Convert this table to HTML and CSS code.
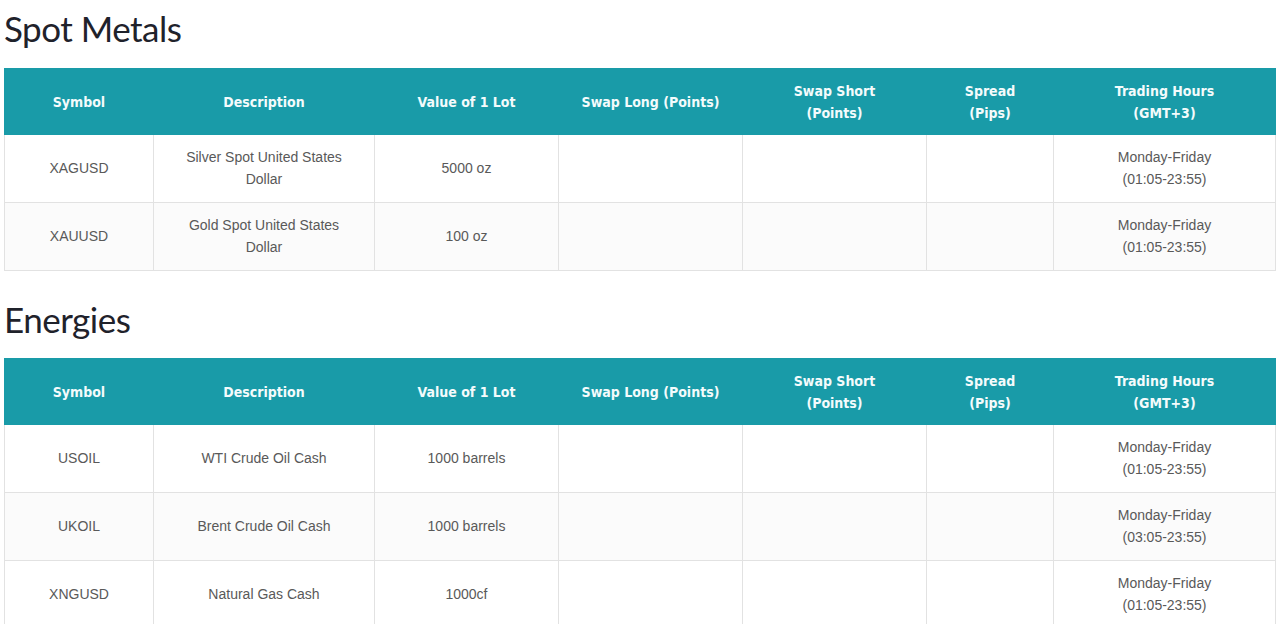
FILE: index.html
```html
<!DOCTYPE html>
<html lang="en">
<head>
<meta charset="utf-8">
<title>Contract Specifications</title>
<link rel="stylesheet" href="styles.css">
</head>
<body>
<section class="section">
  <h2 class="section-title">Spot Metals</h2>
  <table class="spec-table">
    <colgroup>
      <col class="c1"><col class="c2"><col class="c3"><col class="c4"><col class="c5"><col class="c6"><col class="c7">
    </colgroup>
    <thead>
      <tr>
        <th>Symbol</th>
        <th>Description</th>
        <th>Value of 1 Lot</th>
        <th>Swap Long (Points)</th>
        <th>Swap Short<br>(Points)</th>
        <th>Spread<br>(Pips)</th>
        <th>Trading Hours<br>(GMT+3)</th>
      </tr>
    </thead>
    <tbody>
      <tr>
        <td>XAGUSD</td>
        <td>Silver Spot United States<br>Dollar</td>
        <td>5000 oz</td>
        <td></td><td></td><td></td>
        <td>Monday-Friday<br>(01:05-23:55)</td>
      </tr>
      <tr>
        <td>XAUUSD</td>
        <td>Gold Spot United States<br>Dollar</td>
        <td>100 oz</td>
        <td></td><td></td><td></td>
        <td>Monday-Friday<br>(01:05-23:55)</td>
      </tr>
    </tbody>
  </table>
</section>
<section class="section">
  <h2 class="section-title">Energies</h2>
  <table class="spec-table">
    <colgroup>
      <col class="c1"><col class="c2"><col class="c3"><col class="c4"><col class="c5"><col class="c6"><col class="c7">
    </colgroup>
    <thead>
      <tr>
        <th>Symbol</th>
        <th>Description</th>
        <th>Value of 1 Lot</th>
        <th>Swap Long (Points)</th>
        <th>Swap Short<br>(Points)</th>
        <th>Spread<br>(Pips)</th>
        <th>Trading Hours<br>(GMT+3)</th>
      </tr>
    </thead>
    <tbody>
      <tr>
        <td>USOIL</td>
        <td>WTI Crude Oil Cash</td>
        <td>1000 barrels</td>
        <td></td><td></td><td></td>
        <td>Monday-Friday<br>(01:05-23:55)</td>
      </tr>
      <tr>
        <td>UKOIL</td>
        <td>Brent Crude Oil Cash</td>
        <td>1000 barrels</td>
        <td></td><td></td><td></td>
        <td>Monday-Friday<br>(03:05-23:55)</td>
      </tr>
      <tr>
        <td>XNGUSD</td>
        <td>Natural Gas Cash</td>
        <td>1000cf</td>
        <td></td><td></td><td></td>
        <td>Monday-Friday<br>(01:05-23:55)</td>
      </tr>
    </tbody>
  </table>
</section>
</body>
</html>
```
FILE: styles.css
```css
html, body {
  margin: 0;
  padding: 0;
  background: #ffffff;
}
body {
  padding: 0 5px 0 4px;
  font-family: "Liberation Sans", Arial, sans-serif;
}
.section-title {
  margin: 0;
  padding: 6px 0 0 0;
  height: 68px;
  box-sizing: border-box;
  font-family: Lato, "Noto Sans", sans-serif;
  font-weight: 400;
  font-size: 35px;
  letter-spacing: -0.5px;
  line-height: 44px;
  color: #1f222b;
}
.section + .section .section-title {
  margin-top: 26px;
  height: 61px;
  padding-top: 0;
}
.spec-table {
  width: 100%;
  border-collapse: collapse;
  table-layout: fixed;
}
.c1 { width: 149px; }
.c2 { width: 221px; }
.c3 { width: 184px; }
.c4 { width: 184px; }
.c5 { width: 184px; }
.c6 { width: 127px; }
.c7 { width: 222px; }
.spec-table th {
  background: #199ba8;
  color: #f4fbfc;
  font-family: "DejaVu Sans Condensed", "DejaVu Sans", Verdana, sans-serif;
  font-weight: 700;
  font-size: 14px;
  line-height: 22px;
  height: 66px;
  padding: 0 6px;
  box-sizing: border-box;
  text-align: center;
  vertical-align: middle;
  border: 1px solid #199ba8;
}
.spec-table td {
  font-size: 14px;
  line-height: 22px;
  color: #595959;
  text-align: center;
  vertical-align: middle;
  height: 68px;
  padding: 0 6px 2px;
  box-sizing: border-box;
  border: 1px solid #e2e2e2;
}
.spec-table tbody tr:nth-child(even) td {
  background: #fbfbfb;
}
```
